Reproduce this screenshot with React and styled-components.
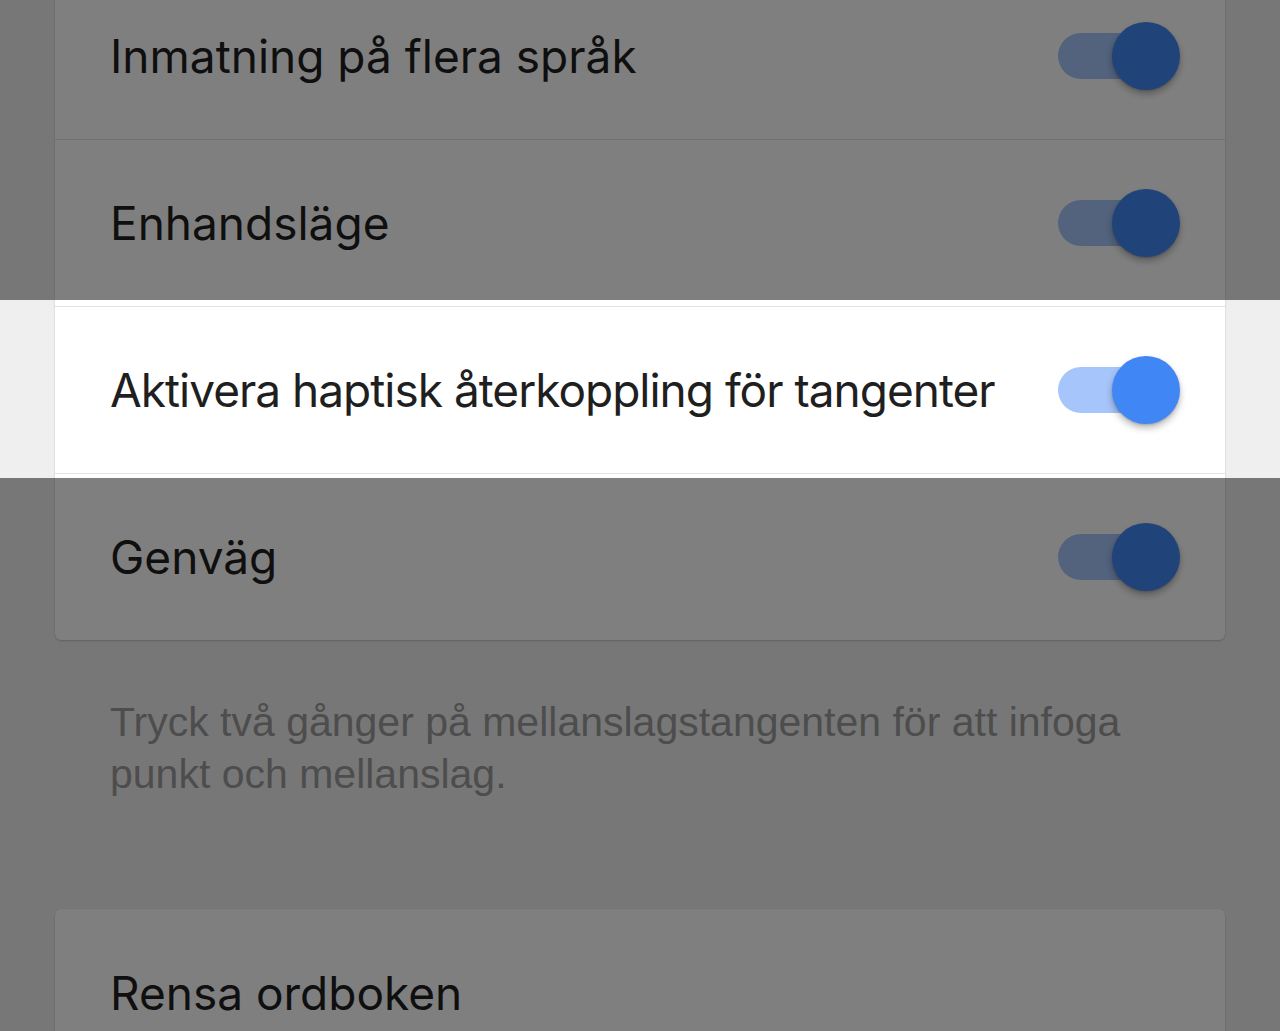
import React from 'react'
import styled, { createGlobalStyle } from 'styled-components'

const GlobalStyle = createGlobalStyle`
  html, body {
    margin: 0;
    padding: 0;
    background: #efefef;
    overflow: hidden;
    height: 1031px;
  }
  body {
    font-family: Inter, "Noto Sans", sans-serif;
    -webkit-font-smoothing: antialiased;
  }
`

const Page = styled.main`
  position: relative;
  height: 1031px;
  padding: 0 55px;
  margin-top: -28px;
`

const Card = styled.section`
  background: #ffffff;
  border-radius: 6px;
  box-shadow: 0 1px 2px rgba(0, 0, 0, 0.18), 0 0 1px rgba(0, 0, 0, 0.12);
  margin-top: ${(p) => p.$top || 0}px;
`

const Row = styled.div`
  height: 167px;
  box-sizing: border-box;
  display: flex;
  align-items: center;
  justify-content: space-between;
  padding: 0 45px 0 55px;
  & + & {
    border-top: 1px solid #e3e3e3;
  }
`

const Label = styled.span`
  font-size: 46px;
  font-weight: 400;
  color: #1f1f1f;
  white-space: nowrap;
  letter-spacing: ${(p) => (p.$tight ? '-1px' : '0')};
`

const Note = styled.p`
  margin: 0;
  padding: 56px 55px 0;
  font-family: 'Liberation Sans', Arial, sans-serif;
  font-size: 41px;
  line-height: 52px;
  color: #9b9b9b;
  max-width: 1030px;
`

const Switch = styled.div`
  display: flex;
  align-items: center;
  flex-shrink: 0;
`

const Track = styled.span`
  width: 96px;
  height: 46px;
  border-radius: 23px;
  background: ${(p) => (p.$on ? '#a6c5fa' : '#cfcfcf')};
`

const Thumb = styled.span`
  width: 68px;
  height: 68px;
  margin-left: ${(p) => (p.$on ? -42 : -96)}px;
  border-radius: 50%;
  background: ${(p) => (p.$on ? '#4186f5' : '#fafafa')};
  box-shadow: 0 4px 7px rgba(0, 0, 0, 0.28), 0 1px 2px rgba(0, 0, 0, 0.15);
`

// coach-mark band: everything outside it is dimmed
const Spotlight = styled.div`
  position: absolute;
  left: 0;
  right: 0;
  top: 328px;
  height: 178px;
  box-shadow: 0 0 0 2000px rgba(0, 0, 0, 0.5);
  pointer-events: none;
`

const Toggle = ({ on }) => (
  <Switch role="switch" aria-checked={on}>
    <Track $on={on} />
    <Thumb $on={on} />
  </Switch>
)

const settings = [
  { label: 'Inmatning på flera språk' },
  { label: 'Enhandsläge' },
  { label: 'Aktivera haptisk återkoppling för tangenter', tight: true },
  { label: 'Genväg' },
]

const App = () => (
  <>
    <GlobalStyle />
    <Page>
      <Card>
        {settings.map(({ label, tight }) => (
          <Row key={label}>
            <Label $tight={tight}>{label}</Label>
            <Toggle on />
          </Row>
        ))}
      </Card>
      <Note>
        Tryck två gånger på mellanslagstangenten för att infoga punkt och
        mellanslag.
      </Note>
      <Card $top={109}>
        <Row>
          <Label>Rensa ordboken</Label>
        </Row>
      </Card>
      <Spotlight />
    </Page>
  </>
)

export default App
